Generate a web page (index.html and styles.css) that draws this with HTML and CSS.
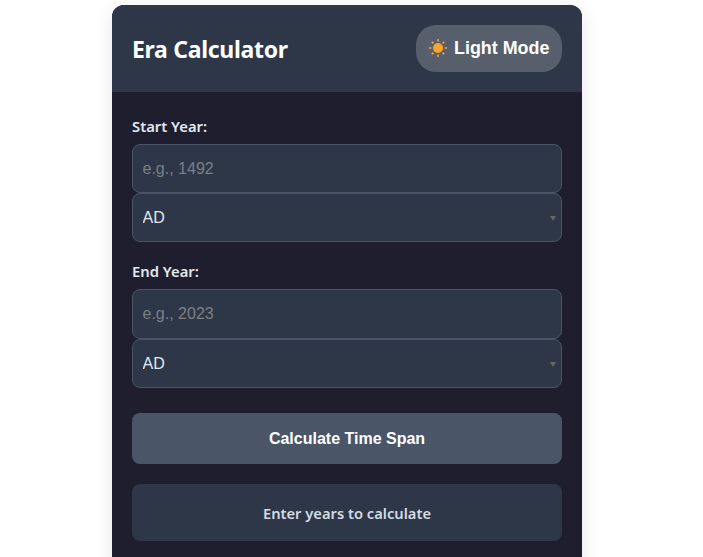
FILE: index.html
```html
<!DOCTYPE html>
<html lang="en">
<head>
<meta charset="utf-8">
<title>Era Calculator</title>
<link rel="stylesheet" href="styles.css">
</head>
<body>
<main class="card">
  <header class="header">
    <h1 class="title">Era Calculator</h1>
    <button class="theme-toggle" type="button">
      <svg class="sun" viewBox="0 0 18 18" width="18" height="18" aria-hidden="true">
        <circle cx="9" cy="9" r="5" fill="#f9a52b"/>
        <g stroke="#f9a52b" stroke-width="1.6" stroke-linecap="butt">
          <path d="M9 0V2.4M9 15.6V18M0 9H2.4M15.6 9H18M2.8 2.8L4.4 4.4M13.6 13.6L15.2 15.2M2.8 15.2L4.4 13.6M13.6 4.4L15.2 2.8"/>
        </g>
      </svg>
      <span>Light Mode</span>
    </button>
  </header>
  <form class="body">
    <div class="group">
      <label class="label" for="start">Start Year:</label>
      <input class="field" id="start" type="text" placeholder="e.g., 1492">
      <div class="select-wrap"><select class="field select"><option>AD</option><option>BC</option></select></div>
    </div>
    <div class="group">
      <label class="label" for="end">End Year:</label>
      <input class="field" id="end" type="text" placeholder="e.g., 2023">
      <div class="select-wrap"><select class="field select"><option>AD</option><option>BC</option></select></div>
    </div>
    <button class="submit" type="button">Calculate Time Span</button>
    <div class="result">Enter years to calculate</div>
  </form>
</main>
</body>
</html>
```
FILE: styles.css
```css
* { box-sizing: border-box; }
html, body { margin: 0; background: #fff; }
body { padding-top: 5px; font-family: "Noto Sans", sans-serif; height: 557px; overflow: hidden; }
.card {
  width: 470px;
  margin-left: 112px;
  background: #1e1e2e;
  border-radius: 12px;
  overflow: hidden;
  box-shadow: 0 4px 20px rgba(0, 0, 0, 0.1);
}
.header {
  display: flex;
  align-items: center;
  justify-content: space-between;
  height: 87px;
  padding: 0 20px;
  background: #2d3748;
}
.title { margin: 2px 0 0; font-size: 23px; font-weight: 700; letter-spacing: -0.3px; color: #fff; line-height: 1.2; }
.theme-toggle {
  display: flex;
  align-items: center;
  gap: 7px;
  width: 146px;
  height: 47px;
  padding: 0 0 0 13px;
  border: 0;
  border-radius: 20px;
  background: rgba(255, 255, 255, 0.2);
  color: #fff;
  font: 700 17.9px "Liberation Sans", Arial, sans-serif;
}
.sun { display: block; flex: none; margin-bottom: 2px; }
.body { padding: 25px 20px 40px; }
.group { margin-bottom: 20px; }
.label {
  display: block;
  margin-bottom: 8px;
  font-size: 14.8px;
  line-height: 19px;
  font-weight: 600;
  color: #e2e8f0;
}
.field {
  display: block;
  width: 100%;
  height: 49.2px;
  padding: 0 9.5px;
  border: 1px solid #4a5568;
  border-radius: 8px;
  background: #2d3748;
  color: #e2e8f0;
  font: 16px "Liberation Sans", Arial, sans-serif;
}
.field::placeholder { color: #7d7f85; }
.select { appearance: none; -webkit-appearance: none; }
.select-wrap { position: relative; }
.select-wrap::after {
  content: "";
  position: absolute;
  right: 6px;
  top: 23px;
  border-left: 3.5px solid transparent;
  border-right: 3.5px solid transparent;
  border-top: 5px solid #666;
  pointer-events: none;
}
.submit {
  display: block;
  width: 100%;
  height: 51px;
  margin-top: 25px;
  padding: 2px 0 0;
  border: 0;
  border-radius: 8px;
  background: #4a5568;
  color: #fff;
  font: 700 16px "Liberation Sans", Arial, sans-serif;
}
.result {
  display: flex;
  align-items: center;
  justify-content: center;
  height: 57px;
  margin-top: 20px;
  padding-top: 2px;
  border-radius: 8px;
  background: #2d3748;
  color: #d5dbe3;
  font-size: 14.7px;
  font-weight: 600;
}
```
